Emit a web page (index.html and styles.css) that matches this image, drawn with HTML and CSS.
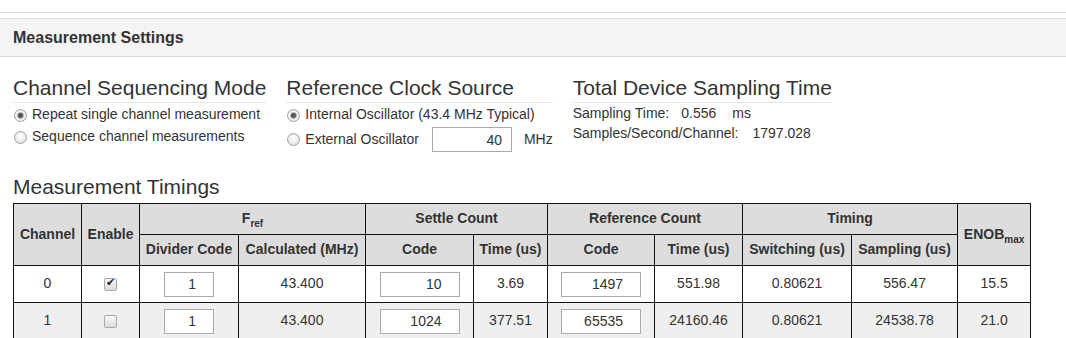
FILE: index.html
```html
<!DOCTYPE html>
<html lang="en">
<head>
    <meta charset="UTF-8">
    <meta name="viewport" content="width=device-width, initial-scale=1.0">
    <title>Measurement Settings</title>
    <link rel="stylesheet" href="styles.css">
</head>

<body>
    <div class="prev-panel"></div>
    <div class="panel">
        <div class="panel-heading">Measurement Settings</div>
        <div class="panel-body">
            <div class="settings-row">
                <fieldset>
                    <legend>Channel Sequencing Mode</legend>
                    <label class="opt"><input type="radio" name="seq" checked>Repeat single channel measurement</label>
                    <label class="opt"><input type="radio" name="seq">Sequence channel measurements</label>
                </fieldset>
                <fieldset>
                    <legend>Reference Clock Source</legend>
                    <label class="opt"><input type="radio" name="clk" checked>Internal Oscillator (43.4 MHz Typical)</label>
                    <div class="opt opt-ext">
                        <label class="opt"><input type="radio" name="clk">External Oscillator</label>
                        <input type="text" class="num ext-freq" value="40">
                        <span class="unit">MHz</span>
                    </div>
                </fieldset>
                <fieldset>
                    <legend>Total Device Sampling Time</legend>
                    <div class="stat">Sampling Time:<span class="val">0.556</span><span class="val unit-ms">ms</span></div>
                    <div class="stat">Samples/Second/Channel:<span class="val val-rate">1797.028</span></div>
                </fieldset>
            </div>

            <div class="section-title">Measurement Timings</div>
            <table class="timings">
                <colgroup>
                    <col class="w-ch">
                    <col class="w-en">
                    <col class="w-div">
                    <col class="w-calc">
                    <col class="w-scode">
                    <col class="w-stime">
                    <col class="w-rcode">
                    <col class="w-rtime">
                    <col class="w-sw">
                    <col class="w-samp">
                    <col class="w-enob">
                </colgroup>
                <thead>
                    <tr>
                        <th rowspan="2">Channel</th>
                        <th rowspan="2">Enable</th>
                        <th colspan="2">F<sub>ref</sub></th>
                        <th colspan="2">Settle Count</th>
                        <th colspan="2">Reference Count</th>
                        <th colspan="2">Timing</th>
                        <th rowspan="2">ENOB<sub>max</sub></th>
                    </tr>
                    <tr>
                        <th>Divider Code</th>
                        <th>Calculated (MHz)</th>
                        <th>Code</th>
                        <th>Time (us)</th>
                        <th>Code</th>
                        <th>Time (us)</th>
                        <th>Switching (us)</th>
                        <th>Sampling (us)</th>
                    </tr>
                </thead>
                <tbody>
                    <tr>
                        <td>0</td>
                        <td><input type="checkbox" checked></td>
                        <td><input type="text" class="num num-sm" value="1"></td>
                        <td>43.400</td>
                        <td><input type="text" class="num" value="10"></td>
                        <td>3.69</td>
                        <td><input type="text" class="num" value="1497"></td>
                        <td>551.98</td>
                        <td>0.80621</td>
                        <td>556.47</td>
                        <td>15.5</td>
                    </tr>
                    <tr>
                        <td>1</td>
                        <td><input type="checkbox"></td>
                        <td><input type="text" class="num num-sm" value="1"></td>
                        <td>43.400</td>
                        <td><input type="text" class="num" value="1024"></td>
                        <td>377.51</td>
                        <td><input type="text" class="num" value="65535"></td>
                        <td>24160.46</td>
                        <td>0.80621</td>
                        <td>24538.78</td>
                        <td>21.0</td>
                    </tr>
                </tbody>
            </table>
        </div>
    </div>
</body>

</html>
```

FILE: styles.css
```css
* {
    box-sizing: border-box;
}
body {
    margin: 0;
    font-family: "Liberation Sans", Arial, sans-serif;
    font-size: 14px;
    line-height: 1.42857;
    color: #333;
    background-color: #fff;
}
.prev-panel {
    height: 13px;
    border-bottom: 1px solid #ddd;
    margin-bottom: 5px;
    background-color: #fff;
}
.panel {
    border-top: 1px solid #ddd;
}
.panel-heading {
    padding: 10px 13px;
    font-size: 16px;
    font-weight: bold;
    line-height: 17px;
    background-color: #f4f4f4;
    border-bottom: 1px solid #ddd;
}
.panel-body {
    padding: 19px 13px 0;
}
.settings-row {
    display: flex;
    align-items: flex-start;
    gap: 20px;
}
fieldset {
    margin: 0;
    padding: 0;
    border: 0;
    min-width: 0;
}
legend {
    display: block;
    width: 100%;
    padding: 0 0 2px;
    font-size: 21px;
    line-height: 24px;
    border-bottom: 1px solid #e5e5e5;
}
.opt {
    display: flex;
    align-items: center;
    height: 22px;
    white-space: nowrap;
}
.opt:first-of-type {
    margin-top: 1px;
}
.opt-ext {
    height: 25px;
}
.opt-ext .opt {
    margin-top: 0;
}
.opt-ext .ext-freq {
    margin-left: 13px;
}
.unit {
    margin-left: 12px;
}
input[type="radio"] {
    appearance: none;
    -webkit-appearance: none;
    width: 13px;
    height: 13px;
    margin: 0 5px 0 1px;
    border: 1px solid #a3a3a3;
    border-radius: 50%;
    background: radial-gradient(circle at 50% 40%, #fff 0, #f0f0f0 45%, #d6d6d6 100%);
}
input[type="radio"]:checked {
    background: radial-gradient(circle, #444 0, #666 2.2px, #c8c8c8 3.2px, #f4f4f4 4.2px, #dadada 100%);
}
input[type="checkbox"] {
    appearance: none;
    -webkit-appearance: none;
    position: relative;
    width: 13px;
    height: 13px;
    margin: 0;
    vertical-align: middle;
    border: 1px solid #a9a9a9;
    border-radius: 2px;
    background: linear-gradient(#f8f8f8, #dcdcdc);
}
input[type="checkbox"]:checked::after {
    content: "\2714";
    position: absolute;
    left: 1px;
    top: -3px;
    font-family: "DejaVu Sans", sans-serif;
    font-size: 11px;
    font-weight: bold;
    color: #222;
}
.num {
    height: 25px;
    width: 80px;
    padding: 0 17px 0 4px;
    border: 1px solid #aaa;
    font-family: inherit;
    font-size: 14px;
    color: #333;
    text-align: right;
    background-color: #fff;
}
.num-sm {
    width: 50px;
}
.ext-freq {
    width: 80px;
    padding-right: 9px;
}
.stat {
    line-height: 20px;
    white-space: nowrap;
}
.val {
    margin-left: 12px;
}
.unit-ms {
    margin-left: 16px;
}
.val-rate {
    margin-left: 14px;
}
.section-title {
    margin: 23px 0 4px;
    font-size: 21px;
    line-height: 24px;
}
.timings {
    border-collapse: collapse;
    table-layout: fixed;
    width: 1017px;
}
.w-ch { width: 68px; }
.w-en { width: 58px; }
.w-div { width: 99px; }
.w-calc { width: 127px; }
.w-scode { width: 108px; }
.w-stime { width: 74px; }
.w-rcode { width: 107px; }
.w-rtime { width: 88px; }
.w-sw { width: 109px; }
.w-samp { width: 106px; }
.w-enob { width: 73px; }
.timings th,
.timings td {
    border: 1px solid #111;
    padding: 0;
    text-align: center;
    vertical-align: middle;
    white-space: nowrap;
}
.timings th {
    height: 31px;
    background-color: #ddd;
    font-weight: bold;
}
.timings td {
    height: 37px;
}
.timings tbody tr:nth-child(2) td {
    background-color: #efefef;
}
.timings sub {
    font-size: 10px;
    line-height: 0;
    position: relative;
    vertical-align: baseline;
    bottom: -4px;
}
.timings td input,
.timings td .num {
    vertical-align: middle;
}
```
